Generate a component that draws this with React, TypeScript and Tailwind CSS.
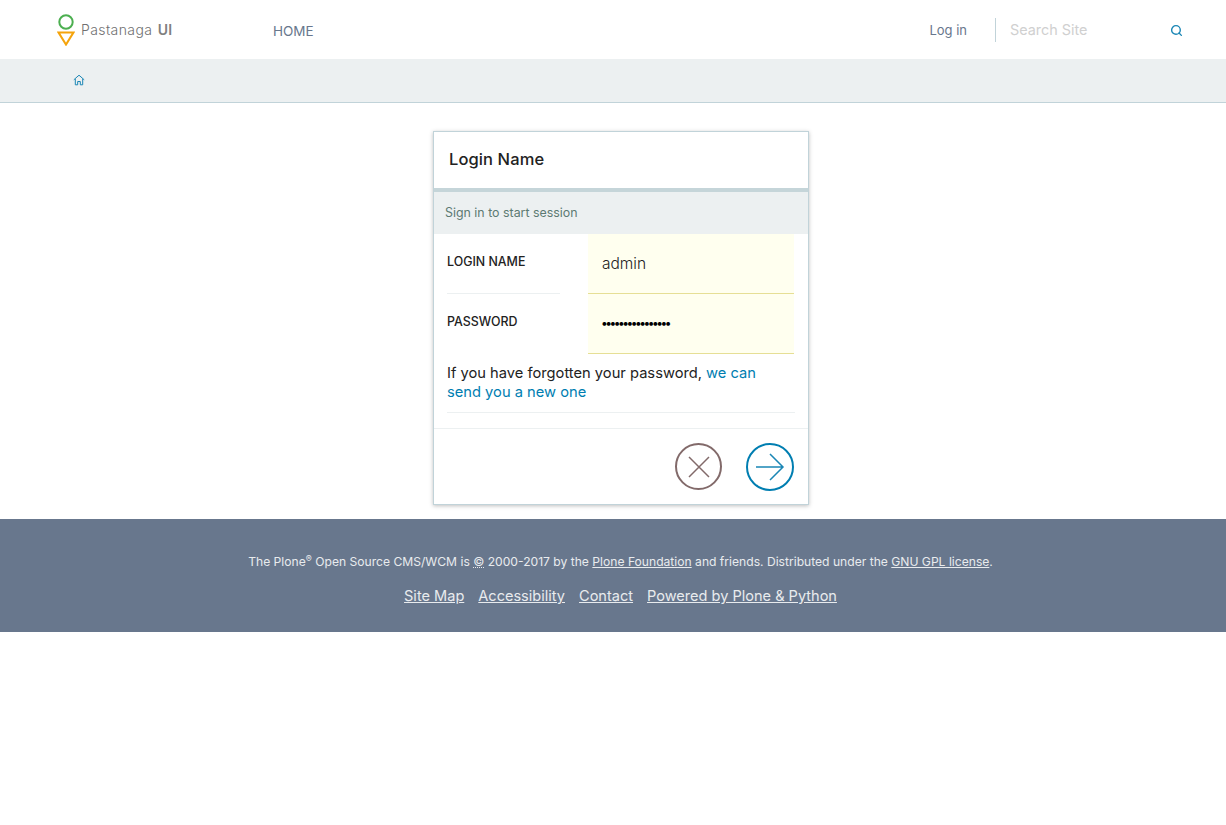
import { Search } from "lucide-react";

const font = "font-['Inter','Liberation_Sans',sans-serif]";

function Logo() {
  return (
    <svg width="18" height="32" viewBox="0 0 18 32" fill="none" className="block">
      <circle cx="9" cy="8" r="6.7" stroke="#4caf50" strokeWidth="2" />
      <path d="M1.6 18.6H16.4L9 30.6Z" stroke="#f5a40c" strokeWidth="2" />
    </svg>
  );
}

function HomeIcon() {
  return (
    <svg width="12" height="12" viewBox="0 0 12 12" fill="none" stroke="#1a86b5" strokeWidth="1" className="block">
      <path d="M0.8 5.8L6 1.2L11.2 5.8" />
      <path d="M2.3 5V10.8H4.7V7.5H7.3V10.8H9.7V5" />
    </svg>
  );
}

export default function App() {
  return (
    <div className={`${font} min-h-[825px] bg-white`}>
      <header className="flex h-[59px] items-center">
        <div className="ml-[57px] flex w-[216px] items-center">
          <Logo />
          <span className="ml-[6px] pb-[1px] text-[14px] font-light tracking-[0.4px] text-[#707070]">
            Pastanaga <b className="ml-[1px] font-semibold text-[#808080]">UI</b>
          </span>
        </div>
        <a className="pt-[3px] text-[13.5px] text-[#68778d]">HOME</a>
        <div className="ml-auto flex items-center">
          <a className="pt-[3px] text-[13px] text-[#68778d]">Log in</a>
          <div className="ml-[28px] h-[24px] w-px bg-[#c1d3d9]" />
          <span className="ml-[14px] w-[161px] text-[14.4px] text-[#d0d0d0]">Search Site</span>
          <Search size={13} strokeWidth={2.6} color="#1a86b5" className="-ml-[1px] mt-[2px]" />
          <div className="w-[43px]" />
        </div>
      </header>

      <div className="flex h-[44px] items-center border-b border-[#c1d3d9] bg-[#ecf0f1] pb-[2px] pl-[73px]">
        <HomeIcon />
      </div>

      <main className="flex h-[416px] justify-center pt-[28px] pl-[16px]">
        <div className="h-[374px] w-[376px] border border-[#c1d3d9] bg-white shadow-[0_1px_4px_rgba(0,0,0,0.25)]">
          <div className="flex h-[56px] items-center px-[15px] pb-[2px] text-[16.5px] font-medium tracking-[0.1px] text-[#222]">
            Login Name
          </div>
          <div className="flex h-[46px] items-center border-t-4 border-[#c5d5d9] bg-[#ecf0f1] px-[11px] text-[12.4px] text-[#5c7a73]">
            Sign in to start session
          </div>
          <div className="px-[13px]">
            <div className="flex h-[60px]">
              <div className="h-full w-[113px] border-b border-[#ecf0f1] pt-[18px] text-[12.4px] font-medium leading-[20px] text-[#222]">
                LOGIN NAME
              </div>
              <input
                readOnly
                type="text"
                value="admin"
                className="ml-[28px] h-full w-[206px] border-b border-[#e6df95] bg-[#ffffef] px-[14px] text-[15.5px] font-light text-[#222] outline-none"
              />
            </div>
            <div className="flex h-[60px]">
              <div className="h-full w-[113px] pt-[18px] text-[12.4px] font-medium leading-[20px] text-[#222]">
                PASSWORD
              </div>
              <input
                readOnly
                type="password"
                value="passwordpassword"
                className="ml-[28px] h-full w-[206px] border-b border-[#e6df95] bg-[#ffffef] pr-[14px] pl-[13px] pb-[2px] text-[12px] tracking-[-2.5px] text-black outline-none"
              />
            </div>
            <p className="border-b border-[#ecf0f1] pt-[10px] pb-[10px] text-[14.7px] leading-[19px] text-[#222]">
              If you have forgotten your password, <a className="text-[#007eb1]">we can<br />send you a new one</a>
            </p>
          </div>
          <div className="mt-[15px] flex h-[76px] items-start justify-end gap-[24px] border-t border-[#ecf0f1] pt-[14px] pr-[14px]">
            <button className="flex h-[47px] w-[47px] items-center justify-center rounded-full border-2 border-[#826a6a]">
              <svg width="24" height="24" viewBox="0 0 24 24" fill="none" stroke="#826a6a" strokeWidth="1.5">
                <path d="M2 2L22 22M22 2L2 22" />
              </svg>
            </button>
            <button className="flex h-[48px] w-[48px] items-center justify-center rounded-full border-2 border-[#007eb1]">
              <svg width="30" height="28" viewBox="0 0 30 28" fill="none" stroke="#1a86b5" strokeWidth="1.5">
                <path d="M1 14H28M15 1L28 14L15 27" />
              </svg>
            </button>
          </div>
        </div>
      </main>

      <footer className="h-[113px] bg-[#68778d] pt-[33px] pl-[15px] text-center text-[#e8ebee]">
        <p className="text-[12.12px] leading-[20px]">
          The Plone<sup className="text-[9px]">®</sup> Open Source CMS/WCM is <abbr className="underline decoration-dotted">©</abbr> 2000-2017 by the{" "}
          <a className="underline">Plone Foundation</a> and friends. Distributed under the{" "}
          <a className="underline">GNU GPL license</a>.
        </p>
        <div className="mt-[14px] flex justify-center gap-[14px] text-[14.55px] leading-[20px]">
          <a className="underline">Site Map</a>
          <a className="underline">Accessibility</a>
          <a className="underline">Contact</a>
          <a className="underline">Powered by Plone &amp; Python</a>
        </div>
      </footer>
    </div>
  );
}
